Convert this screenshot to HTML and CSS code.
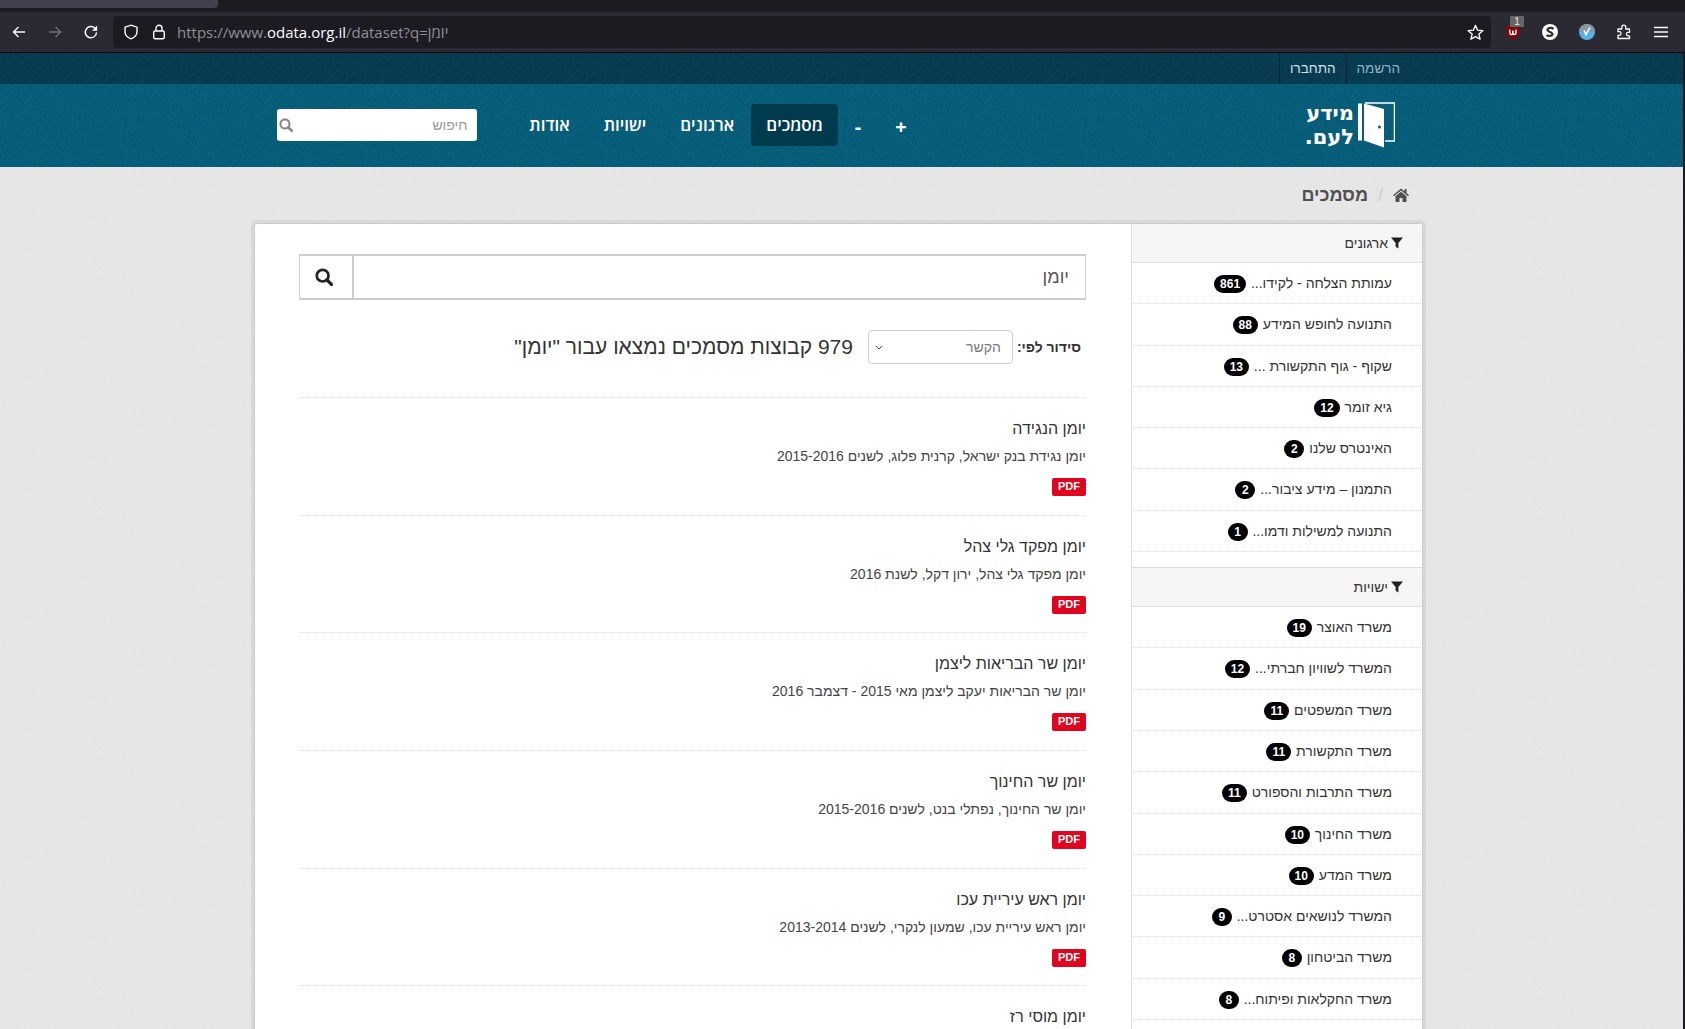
FILE: index.html
```html
<!DOCTYPE html>
<html lang="he">
<head>
  <meta charset="UTF-8">
  <title>מסמכים - מידע לעם</title>
  <link rel="stylesheet" href="styles.css">
</head>
<body>
  <svg class="defs" width="0" height="0">
    <symbol id="filter" viewBox="0 0 12 12"><path d="M0 .5h12L7.4 6v5.5L4.6 9.7V6z"/></symbol>
    <symbol id="search" viewBox="0 0 16 16"><circle cx="6.8" cy="6.8" r="5.2" fill="none" stroke="currentColor" stroke-width="2.4"/><path d="M10.6 10.6l4 4" stroke="currentColor" stroke-width="3" stroke-linecap="round"/></symbol>
  </svg>

  <div class="tabstrip"><div class="tab"></div></div>
  <div class="toolbar">
    <svg class="tool" viewBox="0 0 16 16"><path d="M14 8H2.5M7.5 3l-5 5 5 5" fill="none" stroke="#fbfbfe" stroke-width="1.4"/></svg>
    <svg class="tool" viewBox="0 0 16 16"><path d="M2 8h11.5M8.5 3l5 5-5 5" fill="none" stroke="#6f6e76" stroke-width="1.4"/></svg>
    <svg class="tool" viewBox="0 0 16 16"><path d="M13.5 8.5a5.6 5.6 0 1 1-1.7-4.4L13.5 6" fill="none" stroke="#fbfbfe" stroke-width="1.5"/><path d="M14.2 1.6v5.2H9z" fill="#fbfbfe"/></svg>
    <div class="urlbar">
      <svg class="url-icon" viewBox="0 0 16 16"><path d="M8 1.2l6 2v4.6c0 3.4-2.6 5.8-6 7-3.4-1.2-6-3.600-6-7V3.200z" fill="none" stroke="#fbfbfe" stroke-width="1.4"/></svg>
      <svg class="url-icon" viewBox="0 0 16 16"><rect x="2.700" y="7" width="10.600" height="7.800" rx="1.500" fill="none" stroke="#fbfbfe" stroke-width="1.400"/><path d="M5 7V4.300a3 3 0 0 1 6 0V7" fill="none" stroke="#fbfbfe" stroke-width="1.400"/></svg>
      <span class="url" dir="ltr">https://www.<b>odata.org.il</b>/dataset?q=<span dir="rtl">יומן</span></span>
      <svg class="star" viewBox="0 0 16 16"><path d="M8 1.300l2 4.500 4.900.5-3.700 3.200 1.100 4.800L8 11.800l-4.300 2.500 1.100-4.800L1.100 6.300 6 5.800z" fill="none" stroke="#fbfbfe" stroke-width="1.300" stroke-linejoin="round"/></svg>
    </div>
    <div class="addons">
      <div class="addon ublock">
        <svg viewBox="0 0 16 16"><path d="M8 .5l7 1.800v6c0 3.500-3 6-7 7.200-4-1.200-7-3.700-7-7.200v-6z" fill="#7a0a10"/><path d="M4.800 5.500v3.500a1.500 1.500 0 0 0 3 0V6.500M8 6.500V9a1.500 1.500 0 0 0 3 0V5.500" fill="none" stroke="#fff" stroke-width="1.300"/></svg>
        <span class="addon-badge">1</span>
      </div>
      <svg class="addon" viewBox="0 0 16 16"><circle cx="8" cy="8" r="8" fill="#fbfbfe"/><path d="M11.500 4.800C10 3.600 6 3.400 5.500 5.600c-.5 2.400 5.500 2.200 5 4.800-.4 2-4.500 1.900-6 .7" fill="none" stroke="#2b2a33" stroke-width="2.200"/></svg>
      <svg class="addon" viewBox="0 0 16 16"><circle cx="8" cy="8" r="8" fill="#59aee2"/><path d="M0 8a8 8 0 0 1 16 0L9 6.800 7 10.500 5 6.300z" fill="#8a96a0"/><path d="M5 6.300l2 4.200 3.800-6.800" fill="none" stroke="#fff" stroke-width="1.500"/></svg>
      <svg class="addon" viewBox="0 0 16 16"><path d="M2 5.500h3.800V3.700a2 2 0 0 1 4 0v1.800h3.700v3.300h-1.300a1.800 1.800 0 0 0 0 3.600h1.300V15H2v-3.200h1.300a1.800 1.800 0 0 0 0-3.600H2z" transform="translate(0 -.5)" fill="none" stroke="#fbfbfe" stroke-width="1.300" stroke-linejoin="round"/></svg>
      <svg class="addon" viewBox="0 0 16 16"><path d="M1 3.500h14M1 8h14M1 12.500h14" stroke="#fbfbfe" stroke-width="1.400"/></svg>
    </div>
  </div>

  <div class="page">
    <div class="topbar">
      <div class="wrap topbar-links">
        <a class="top-link">הרשמה</a>
        <a class="top-link strong">התחברו</a>
      </div>
    </div>

    <header class="masthead">
      <div class="wrap masthead-row">
        <div class="logo">
          <svg class="door" viewBox="0 0 37 46"><path d="M7 1h29.500v38H27" fill="none" stroke="#fff" stroke-width="1.500"/><rect x="0" y="1.500" width="4" height="37" fill="#fff"/><path d="M6 1.500l20 5.500v38.500L6 38.500z" fill="#fff"/><circle cx="21.500" cy="25" r="1.500" fill="#005d7a"/></svg>
          <div class="logo-text"><span>מידע</span><span>לעם.</span></div>
        </div>
        <nav class="nav">
          <a class="nav-link sign plus">+</a>
          <a class="nav-link sign">-</a>
          <a class="nav-link active">מסמכים</a>
          <a class="nav-link">ארגונים</a>
          <a class="nav-link">ישויות</a>
          <a class="nav-link">אודות</a>
        </nav>
        <div class="site-search">
          <span class="placeholder">חיפוש</span>
          <svg class="site-search-icon"><use href="#search"/></svg>
        </div>
      </div>
    </header>

    <main class="wrap">
      <div class="breadcrumb">
        <svg class="home" viewBox="0 0 16 14"><path d="M8 .5L0 7.200l1 1.100L8 2.500l7 5.800 1-1.100-2.500-2.100V1h-2v2.500z"/><path d="M8 3.700L2.500 8.300V14h4v-4h3v4h4V8.300z"/></svg>
        <span class="crumb-sep">/</span>
        <span class="crumb">מסמכים</span>
      </div>

      <div class="card">
        <aside class="sidebar">
          <section class="facet">
            <h2 class="facet-title"><svg class="filter"><use href="#filter"/></svg>ארגונים</h2>
            <ul class="facet-list">
              <li class="facet-item">עמותת הצלחה - לקידו... <span class="badge">861</span></li>
              <li class="facet-item">התנועה לחופש המידע <span class="badge">88</span></li>
              <li class="facet-item">שקוף - גוף התקשורת ... <span class="badge">13</span></li>
              <li class="facet-item">גיא זומר <span class="badge">12</span></li>
              <li class="facet-item">האינטרס שלנו <span class="badge">2</span></li>
              <li class="facet-item">התמנון – מידע ציבור... <span class="badge">2</span></li>
              <li class="facet-item">התנועה למשילות ודמו... <span class="badge">1</span></li>
            </ul>
          </section>
          <section class="facet">
            <h2 class="facet-title"><svg class="filter"><use href="#filter"/></svg>ישויות</h2>
            <ul class="facet-list">
              <li class="facet-item">משרד האוצר <span class="badge">19</span></li>
              <li class="facet-item">המשרד לשוויון חברתי... <span class="badge">12</span></li>
              <li class="facet-item">משרד המשפטים <span class="badge">11</span></li>
              <li class="facet-item">משרד התקשורת <span class="badge">11</span></li>
              <li class="facet-item">משרד התרבות והספורט <span class="badge">11</span></li>
              <li class="facet-item">משרד החינוך <span class="badge">10</span></li>
              <li class="facet-item">משרד המדע <span class="badge">10</span></li>
              <li class="facet-item">המשרד לנושאים אסטרט... <span class="badge">9</span></li>
              <li class="facet-item">משרד הביטחון <span class="badge">8</span></li>
              <li class="facet-item">משרד החקלאות ופיתוח... <span class="badge">8</span></li>
              <li class="facet-item"></li>
            </ul>
          </section>
        </aside>

        <div class="content">
          <div class="search-box">
            <div class="search-input">יומן</div>
            <div class="search-btn"><svg class="search-btn-icon"><use href="#search"/></svg></div>
          </div>

          <div class="results-head">
            <label class="sort-label">סידור לפי:</label>
            <div class="sort-select">
              <span>הקשר</span>
              <svg class="chevron" viewBox="0 0 10 6"><path d="M1 1l4 4 4-4" fill="none" stroke="#333" stroke-width="1.200"/></svg>
            </div>
            <h1 class="results-title">979 קבוצות מסמכים נמצאו עבור "יומן"</h1>
          </div>

          <article class="dataset">
            <h3 class="dataset-title">יומן הנגידה</h3>
            <p class="dataset-desc">יומן נגידת בנק ישראל, קרנית פלוג, לשנים 2015-2016</p>
            <span class="pdf">PDF</span>
          </article>
          <article class="dataset">
            <h3 class="dataset-title">יומן מפקד גלי צהל</h3>
            <p class="dataset-desc">יומן מפקד גלי צהל, ירון דקל, לשנת 2016</p>
            <span class="pdf">PDF</span>
          </article>
          <article class="dataset">
            <h3 class="dataset-title">יומן שר הבריאות ליצמן</h3>
            <p class="dataset-desc">יומן שר הבריאות יעקב ליצמן מאי 2015 - דצמבר 2016</p>
            <span class="pdf">PDF</span>
          </article>
          <article class="dataset">
            <h3 class="dataset-title">יומן שר החינוך</h3>
            <p class="dataset-desc">יומן שר החינוך, נפתלי בנט, לשנים 2015-2016</p>
            <span class="pdf">PDF</span>
          </article>
          <article class="dataset">
            <h3 class="dataset-title">יומן ראש עיריית עכו</h3>
            <p class="dataset-desc">יומן ראש עיריית עכו, שמעון לנקרי, לשנים 2013-2014</p>
            <span class="pdf">PDF</span>
          </article>
          <article class="dataset">
            <h3 class="dataset-title">יומן מוסי רז</h3>
          </article>
        </div>
      </div>
    </main>
  </div>
</body>
</html>
```

FILE: styles.css
```css
* {
  box-sizing: border-box;
}

html, body {
  margin: 0;
  height: 1029px;
  overflow: hidden;
}

body {
  font-family: "Liberation Sans", Arial, sans-serif;
  font-size: 14px;
  color: #444;
  background: #1c1b22;
}

.defs {
  position: absolute;
}

/* browser chrome */
.tabstrip {
  height: 12px;
  background: #1c1b22;
}

.tab {
  width: 218px;
  height: 8px;
  background: #42414d;
  border-bottom-right-radius: 4px;
}

.toolbar {
  display: flex;
  align-items: center;
  height: 41px;
  padding: 0 14px 0 11px;
  background: #2b2a33;
  border-bottom: 1px solid #0c0c0f;
}

.tool {
  width: 16px;
  height: 16px;
  margin-right: 20px;
}

.tool:nth-child(3) {
  margin-right: 14px;
}

.urlbar {
  display: flex;
  align-items: center;
  width: 1378px;
  height: 32px;
  padding: 0 7px 0 10px;
  background: #1c1b22;
  border-radius: 4px;
}

.url-icon {
  width: 16px;
  height: 16px;
  margin-right: 12px;
}

.url-icon + .url {
  margin-left: -2px;
}

.url {
  font-family: "Open Sans", "Liberation Sans", sans-serif;
  font-size: 15px;
  color: #8f8f95;
}

.url b {
  font-weight: 400;
  color: #fbfbfe;
}

.star {
  width: 17px;
  height: 17px;
  margin: 0 0 0 auto;
}

.addons {
  display: flex;
  align-items: center;
  gap: 21px;
  margin-left: 14px;
}

.addon {
  position: relative;
  width: 16px;
  height: 16px;
  flex: none;
}

.addon svg {
  display: block;
  width: 16px;
  height: 16px;
}

.addon-badge {
  position: absolute;
  top: -8px;
  left: 5px;
  width: 14px;
  height: 11px;
  background: #666;
  border-radius: 1px;
  color: #eee;
  font-size: 10px;
  line-height: 11px;
  text-align: center;
}

/* page, the site has a faint speckled texture on its backgrounds */
.page,
.topbar,
.masthead {
  background-image: url("data:image/svg+xml,%3Csvg xmlns='http://www.w3.org/2000/svg' width='240' height='240'%3E%3Cfilter id='n'%3E%3CfeTurbulence type='fractalNoise' baseFrequency='.9' numOctaves='2'/%3E%3CfeColorMatrix values='0 0 0 0 1 0 0 0 0 1 0 0 0 0 1 0 0 0 .16 -.05'/%3E%3C/filter%3E%3Crect width='240' height='240' filter='url(%23n)'/%3E%3C/svg%3E");
}

.page {
  height: 976px;
  margin-right: 2px;
  background-color: #e5e5e5;
  overflow: hidden;
  direction: rtl;
}

.wrap {
  width: 1170px;
  margin-right: 259px;
}

.topbar {
  height: 31px;
  background-color: #00354a;
}

.topbar-links {
  display: flex;
  height: 100%;
  padding-right: 14px;
}

.top-link {
  display: flex;
  align-items: center;
  padding: 0 10px;
  border-left: 1px solid #00222e;
  font-size: 13.5px;
  color: #8fb4c2;
}

.top-link.strong {
  color: #cfe0e6;
  font-weight: 500;
}

.masthead {
  height: 83px;
  background-color: #005874;
}

.masthead-row {
  display: flex;
  align-items: center;
  height: 100%;
  padding-bottom: 2px;
}

.logo {
  display: flex;
  align-items: center;
  gap: 4px;
  margin-right: 29px;
}

.door {
  width: 37px;
  height: 46px;
}

.logo-text {
  display: flex;
  flex-direction: column;
  font-family: "DejaVu Sans", sans-serif;
  font-size: 21px;
  font-weight: 700;
  line-height: 24px;
  color: #fff;
}

.nav {
  display: flex;
  align-items: center;
  margin-right: 381px;
  font-family: "Open Sans", "Liberation Sans", sans-serif;
  font-size: 17px;
  font-weight: 600;
}

.nav-link {
  padding: 10px 17px;
  line-height: 22px;
  border-radius: 4px;
  color: #fff;
}

.nav-link.active {
  padding: 10px 15px;
  background: #003a4d;
}

.nav-link.sign {
  margin-top: 4px;
  padding: 10px 17px;
  font-size: 20px;
  font-weight: 700;
}

.site-search {
  display: flex;
  align-items: center;
  justify-content: space-between;
  width: 200px;
  height: 32px;
  margin-right: 35px;
  padding: 0 10px 0 2px;
  background: #fff;
  border-radius: 3px;
}

.placeholder {
  font-size: 14px;
  color: #999;
}

.site-search-icon {
  width: 14px;
  height: 14px;
  color: #888;
}

.breadcrumb {
  display: flex;
  align-items: center;
  height: 56px;
  padding: 0 15px 0 0;
  color: #505050;
}

.home {
  width: 16px;
  height: 14px;
  fill: #505050;
}

.crumb-sep {
  margin: 0 10px;
  font-size: 18px;
  color: #ccc;
}

.crumb {
  font-size: 18px;
  font-weight: 700;
}

.card {
  display: flex;
  height: 900px;
  margin-right: 1px;
  background: #fff;
  border: 1px solid #ccc;
  border-radius: 3px;
  box-shadow: 0 0 0 3px rgba(0, 0, 0, .06);
}

/* sidebar */
.sidebar {
  width: 291px;
  flex: none;
  border-left: 1px solid #ddd;
}

.facet-title {
  display: flex;
  align-items: center;
  height: 39px;
  margin: 0;
  padding-right: 19px;
  background: #f5f5f5;
  border-bottom: 1px solid #ddd;
  font-size: 14px;
  font-weight: 400;
  color: #333;
}

.facet + .facet .facet-title {
  height: 40px;
  border-top: 1px solid #ddd;
}

.filter {
  width: 12px;
  height: 12px;
  margin-left: 3px;
  fill: #222;
}

.facet-list {
  margin: 0;
  padding: 0 0 15px;
  list-style: none;
}

.facet-item {
  height: 41.3px;
  margin: 0 1px;
  padding: 10px 29px 0 0;
  border-bottom: 1px dotted #ddd;
  font-size: 14px;
  line-height: 20px;
  color: #333;
}

.badge {
  display: inline-block;
  min-width: 20px;
  padding: 0 6px;
  margin-right: 1px;
  background: #000;
  border-radius: 9px;
  color: #fff;
  font-size: 12px;
  font-weight: 700;
  line-height: 18px;
  text-align: center;
  vertical-align: 0;
}

/* results */
.content {
  flex: 1;
  padding: 30px 44px 0 0;
  margin-left: 44px;
  padding-right: 45px;
}

.search-box {
  display: flex;
  height: 46px;
  border: 2px solid #ccc;
  border-width: 2px 1px;
}

.search-input {
  flex: 1;
  padding: 0 16px;
  font-size: 18px;
  line-height: 42px;
  color: #555;
}

.search-btn {
  display: flex;
  align-items: center;
  justify-content: center;
  width: 54px;
  padding-right: 5px;
  border-right: 2px solid #ccc;
}

.search-btn-icon {
  width: 18px;
  height: 18px;
  color: #222;
}

.results-head {
  display: flex;
  align-items: center;
  height: 98px;
  padding: 0 5px 3px 0;
  border-bottom: 1px dotted #ddd;
}

.sort-label {
  font-size: 14px;
  font-weight: 700;
  color: #333;
}

.sort-select {
  display: flex;
  align-items: center;
  justify-content: space-between;
  width: 145px;
  height: 34px;
  margin-right: 4px;
  padding: 0 11px 0 6px;
  border: 1px solid #ccc;
  border-radius: 4px;
  color: #777;
}

.chevron {
  width: 8px;
  height: 5px;
}

.results-title {
  margin: 0 15px 0 0;
  font-size: 21px;
  font-weight: 400;
  color: #333;
}

.dataset {
  height: 117.7px;
  padding-top: 21px;
  border-bottom: 1px dotted #ddd;
}

.dataset-title {
  margin: 0;
  font-size: 16px;
  font-weight: 400;
  line-height: 20px;
  color: #333;
}

.dataset-desc {
  margin: 7px 0 12px;
  font-size: 14px;
  line-height: 20px;
  color: #444;
}

.pdf {
  display: block;
  width: 34px;
  height: 18px;
  background: #e0051e;
  border-radius: 2px;
  color: #fff;
  font-size: 11px;
  font-weight: 700;
  line-height: 17px;
  text-align: center;
}
```
